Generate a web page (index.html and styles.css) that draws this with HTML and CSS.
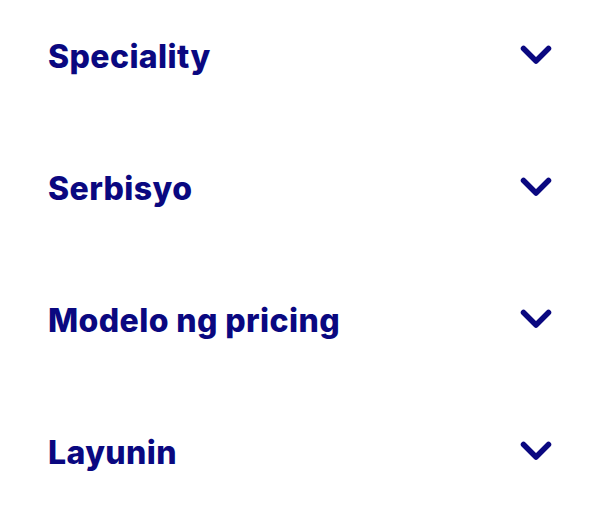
FILE: index.html
```html
<!DOCTYPE html>
<html lang="tl">
<head>
  <meta charset="UTF-8">
  <meta name="viewport" content="width=device-width, initial-scale=1.0">
  <title>Filters</title>
  <link rel="stylesheet" href="styles.css">
</head>
<body>
  <div class="filters">
    <div class="filter-row">
      <span class="filter-title">Speciality</span>
      <svg class="chevron" viewBox="0 0 32 20"><path d="M3.5 3.5 L16 16 L28.5 3.5"/></svg>
    </div>
    <div class="filter-row">
      <span class="filter-title">Serbisyo</span>
      <svg class="chevron" viewBox="0 0 32 20"><path d="M3.5 3.5 L16 16 L28.5 3.5"/></svg>
    </div>
    <div class="filter-row">
      <span class="filter-title">Modelo ng pricing</span>
      <svg class="chevron" viewBox="0 0 32 20"><path d="M3.5 3.5 L16 16 L28.5 3.5"/></svg>
    </div>
    <div class="filter-row">
      <span class="filter-title">Layunin</span>
      <svg class="chevron" viewBox="0 0 32 20"><path d="M3.5 3.5 L16 16 L28.5 3.5"/></svg>
    </div>
  </div>
</body>
</html>
```

FILE: styles.css
```css
body {
  margin: 0;
  background: #fff;
  font-family: Inter, "Liberation Sans", Arial, sans-serif;
  -webkit-font-smoothing: antialiased;
}

.filters {
  display: flex;
  flex-direction: column;
  gap: 92px;
  padding: 37px 48px;
}

.filter-row {
  display: flex;
  align-items: center;
  justify-content: space-between;
  height: 40px;
  cursor: pointer;
}

.filter-title {
  font-size: 32px;
  line-height: 40px;
  font-weight: 800;
  letter-spacing: 0.4px;
  color: #0a0880;
}

.chevron {
  width: 32px;
  height: 20px;
  margin-top: -4px;
  fill: none;
  stroke: #0a0880;
  stroke-width: 5.5;
  stroke-linecap: round;
  stroke-linejoin: round;
}
```
